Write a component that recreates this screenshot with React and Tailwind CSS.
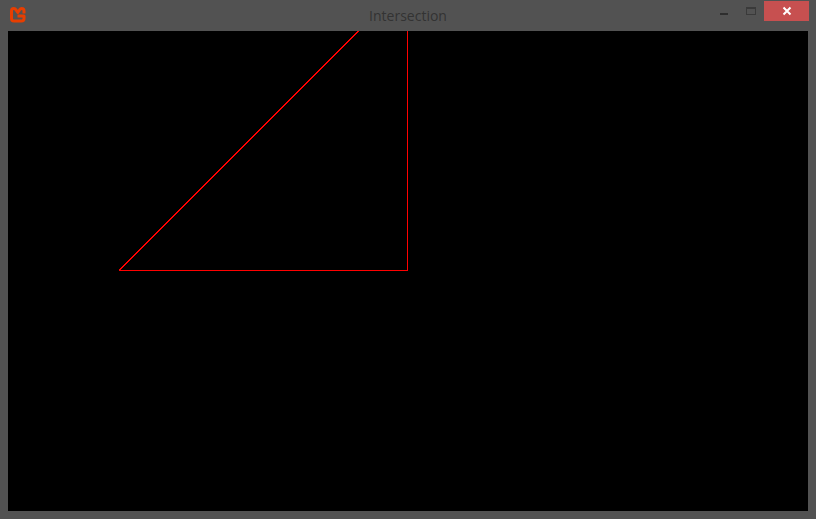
// Game window with a triangle drawn on the canvas
function Logo() {
  return (
    <svg width="18" height="18" viewBox="0 0 18 18" className="block">
      <path
        fill="none"
        stroke="#e73e01"
        strokeWidth="3"
        strokeLinejoin="round"
        d="M8.5 10 H15 V12.5 Q15 15 12.5 15 H5 Q2.5 15 2.5 12.5 V5 Q2.5 2.5 4.8 2.5 Q6.2 2.5 7 3.8 L8.8 6.4 L10.6 3.8 Q11.4 2.5 12.7 2.5 Q15 2.5 15 5 V7.5"
      />
    </svg>
  );
}

export default function App() {
  return (
    <div className="w-[816px] h-[519px] flex flex-col bg-[#525252] font-['Open_Sans',sans-serif] overflow-hidden">
      {/* title bar */}
      <div className="h-[31px] shrink-0 grid grid-cols-[1fr_auto_1fr]">
        <div className="pl-[9px] pt-[6px]">
          <Logo />
        </div>
        <div className="pt-[6px] text-[14px] leading-[19px] text-[#333333]">Intersection</div>
        <div className="flex justify-end items-start pt-px pr-[7px]">
          <div className="w-[8px] h-[2px] mt-[12px] mr-[18px] bg-[#2e2e2e]" />
          <div className="w-[10px] h-[8px] mt-[6px] mr-[8px] border border-[#3a3a3a] border-t-2" />
          <div className="w-[45px] h-[20px] bg-[#c75050] flex items-center justify-center">
            <svg width="10" height="10" viewBox="0 0 10 10">
              <path d="M1.5 1.5 L8.5 8.5 M8.5 1.5 L1.5 8.5" stroke="#ffffff" strokeWidth="2" />
            </svg>
          </div>
        </div>
      </div>

      {/* game canvas */}
      <div className="mx-2 w-[800px] h-[480px] bg-black">
        <svg width="800" height="480" viewBox="0 0 800 480" className="block" shapeRendering="crispEdges">
          <path d="M111 239.5 L399.5 239.5 L399.5 0" fill="none" stroke="#ff0000" strokeWidth="1" />
          <path d="M111 239.5 L350.5 0" fill="none" stroke="#ff0000" strokeWidth="1.15" />
        </svg>
      </div>
    </div>
  );
}
